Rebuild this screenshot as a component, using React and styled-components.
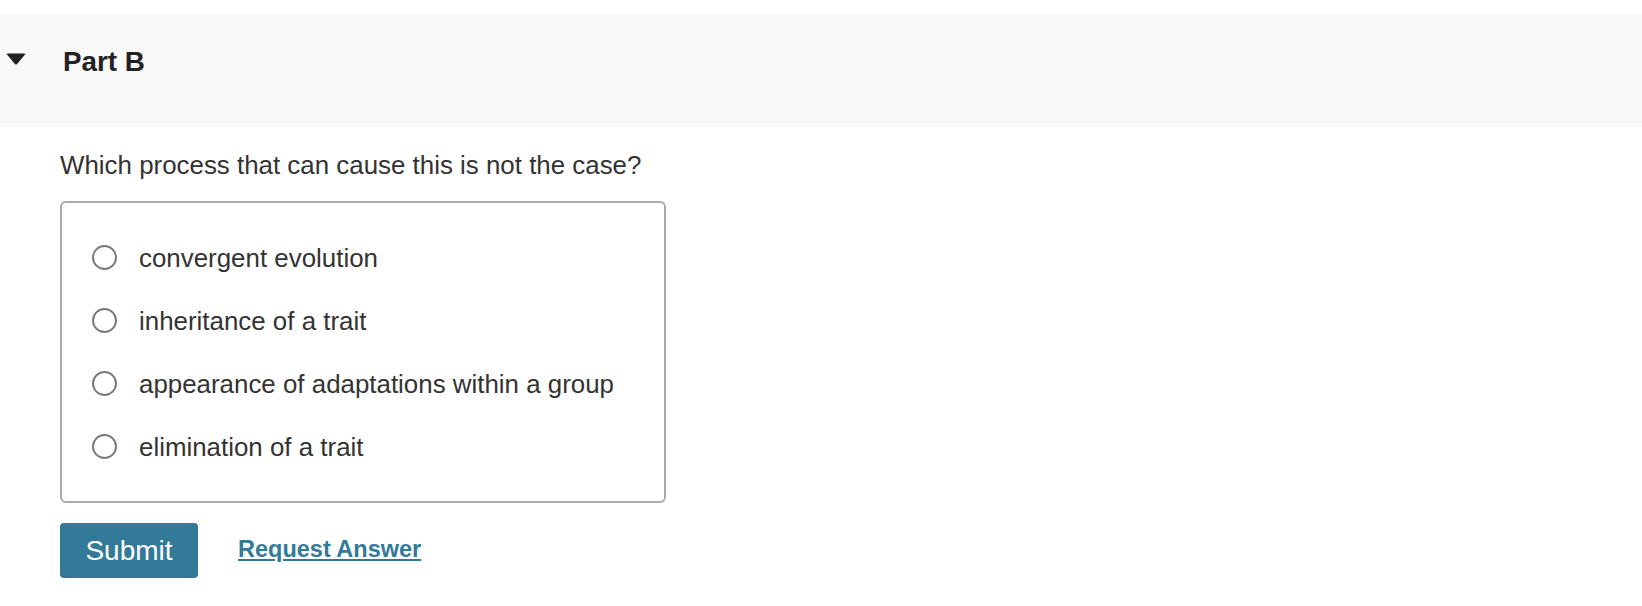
import React, { useState } from 'react';
import styled, { createGlobalStyle } from 'styled-components';

const GlobalStyle = createGlobalStyle`
    html, body {
        margin: 0;
        padding: 0;
        background: #ffffff;
        font-family: "Liberation Sans", Arial, Helvetica, sans-serif;
        color: #333333;
    }
`;

const Page = styled.div`
    padding-top: 14px;
`;

const PartHeader = styled.div`
    display: flex;
    align-items: flex-start;
    height: 113px;
    box-sizing: border-box;
    padding: 34px 0 0 6px;
    background: #f8f8f8;
`;

const Caret = styled.svg`
    width: 20px;
    height: 12px;
    margin-top: 5px;
    flex-shrink: 0;
`;

const PartTitle = styled.h2`
    margin: 0 0 0 37px;
    font-size: 27.8px;
    line-height: 27px;
    font-weight: 700;
    color: #222222;
`;

const Body = styled.div`
    padding: 23px 0 0 60px;
`;

const Question = styled.p`
    margin: 0 0 20px;
    font-size: 25.9px;
    line-height: 31px;
    color: #333333;
`;

const Choices = styled.div`
    width: 606px;
    height: 302px;
    box-sizing: border-box;
    padding: 23px 0 23px;
    border: 2px solid #a9a9a9;
    border-radius: 6px;
`;

const Choice = styled.label`
    display: flex;
    align-items: center;
    height: 63px;
    padding-left: 30px;
    cursor: pointer;
`;

const Radio = styled.span`
    width: 25px;
    height: 25px;
    box-sizing: border-box;
    flex-shrink: 0;
    border-radius: 50%;
    border: 2px solid ${p => (p.$checked ? '#337a99' : '#7a7a7a')};
    background: ${p => (p.$checked ? 'radial-gradient(circle, #337a99 0 5px, #fff 6px)' : '#fff')};
`;

const ChoiceText = styled.span`
    margin-left: 22px;
    padding-top: 1px;
    font-size: 25.9px;
    line-height: 30px;
    color: #333333;
`;

const Actions = styled.div`
    display: flex;
    align-items: center;
    margin-top: 20px;
`;

const SubmitButton = styled.button`
    width: 138px;
    height: 55px;
    padding: 0;
    border: none;
    border-radius: 4px;
    background: #337a99;
    color: #ffffff;
    font-family: inherit;
    font-size: 28px;
    line-height: 30px;
    cursor: pointer;
`;

const RequestLink = styled.a`
    margin: 0 0 4px 40px;
    font-size: 23.5px;
    font-weight: 700;
    line-height: 28px;
    color: #337a99;
    text-decoration: underline;
    text-underline-offset: 2px;
    cursor: pointer;
`;

const options = [
    'convergent evolution',
    'inheritance of a trait',
    'appearance of adaptations within a group',
    'elimination of a trait',
];

export default function App() {
    const [picked, setPicked] = useState(null);

    return (
        <Page>
            <GlobalStyle />
            <PartHeader>
                <Caret viewBox="0 0 20 12">
                    <path d="M1.5 0.5 L18.5 0.5 Q19.8 0.5 19 1.6 L11.1 11 Q10 12.2 8.9 11 L1 1.6 Q0.2 0.5 1.5 0.5 Z" fill="#1f1f1f" />
                </Caret>
                <PartTitle>Part B</PartTitle>
            </PartHeader>
            <Body>
                <Question>Which process that can cause this is not the case?</Question>
                <Choices role="radiogroup">
                    {options.map((text, i) => (
                        <Choice key={text} onClick={() => setPicked(i)}>
                            <Radio $checked={picked === i} />
                            <ChoiceText>{text}</ChoiceText>
                        </Choice>
                    ))}
                </Choices>
                <Actions>
                    <SubmitButton>Submit</SubmitButton>
                    <RequestLink>Request Answer</RequestLink>
                </Actions>
            </Body>
        </Page>
    );
}
